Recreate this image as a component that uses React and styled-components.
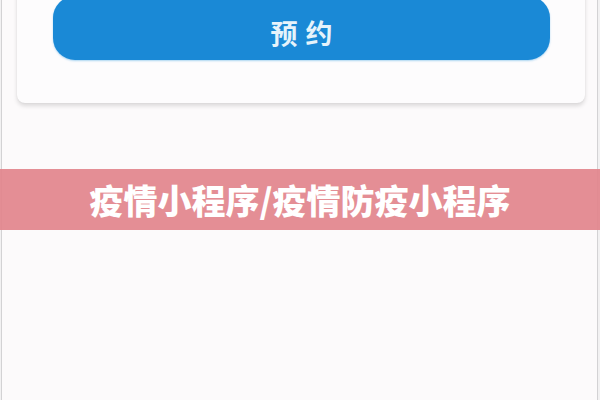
import styled, { createGlobalStyle } from "styled-components";

const GlobalStyle = createGlobalStyle`
    html, body {
        margin: 0;
        padding: 0;
        background-color: #f6f5f6;
    }

    #root {
        width: 600px;
        height: 400px;
        overflow: hidden;
    }
`;

export default function App() {
    return (
        <>
            <GlobalStyle />
            <Thumb>
                <Screen>
                    <Card>
                        <BookButton>预约</BookButton>
                    </Card>
                </Screen>
                <Caption>疫情小程序/疫情防疫小程序</Caption>
            </Thumb>
        </>
    );
}

const Thumb = styled.div`
    position: relative;
    width: 600px;
    height: 400px;
    padding: 0 2px 0 1px;
    box-sizing: border-box;
    background-color: #f2f1f2;
    font-family: "Noto Sans CJK SC", "Noto Sans", sans-serif;
`;

const Screen = styled.div`
    height: 100%;
    box-sizing: border-box;
    border-left: 1px solid #d3d2d4;
    border-right: 1px solid #d3d2d4;
    padding: 0 12px 0 15px;
    background-color: #fcfafb;
    display: flex;
    flex-direction: column;
`;

const Card = styled.div`
    margin-top: -24px;
    padding: 20px 35px 43px 36px;
    background-color: #fdfcfd;
    border-radius: 8px;
    box-shadow: 0 3px 4px rgba(0, 0, 0, 0.13), 0 0 2px rgba(0, 0, 0, 0.06);
    display: flex;
`;

const BookButton = styled.div`
    flex: 1;
    height: 64px;
    border-radius: 22px;
    background-color: #1a89d6;
    box-shadow: 0 1px 2px rgba(20, 140, 220, 0.35);
    color: #e6f3fb;
    font-size: 27px;
    font-weight: 700;
    letter-spacing: 8px;
    text-indent: 8px;
    display: flex;
    align-items: center;
    justify-content: center;
    padding-top: 8px;
    box-sizing: border-box;
`;

const Caption = styled.div`
    position: absolute;
    left: 0;
    right: 0;
    top: 169px;
    height: 61px;
    background-color: rgba(226, 132, 140, 0.92);
    color: #ffffff;
    font-size: 34px;
    font-weight: 900;
    display: flex;
    align-items: center;
    justify-content: center;
`;
